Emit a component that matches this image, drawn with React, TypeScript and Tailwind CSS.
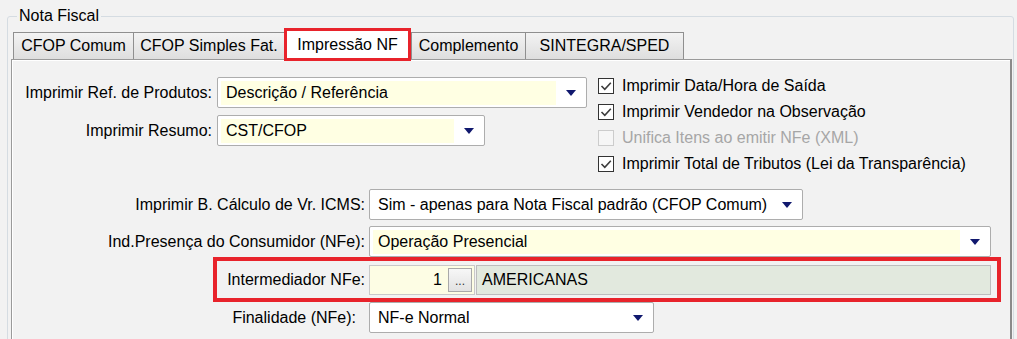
import React from "react";

type ComboProps = {
  width: string;
  value: string;
  yellow?: boolean;
};

function Arrow() {
  return (
    <svg width="10" height="6" viewBox="0 0 10 6">
      <path d="M0 0 H10 L5 6 Z" fill="#10186e" />
    </svg>
  );
}

function Combo({ width, value, yellow }: ComboProps) {
  return (
    <div
      className={`${width} h-[31px] shrink-0 border border-[#adadad] rounded-[2px] bg-white flex items-center`}
    >
      <div
        className={`flex-1 h-[24px] ml-[3px] pl-[5px] flex items-center whitespace-nowrap ${
          yellow ? "bg-[#ffffe3]" : ""
        }`}
      >
        {value}
      </div>
      <div className="w-[30px] h-full flex items-center justify-center">
        <Arrow />
      </div>
    </div>
  );
}

function Check({
  label,
  checked,
  disabled,
}: {
  label: string;
  checked?: boolean;
  disabled?: boolean;
}) {
  return (
    <div className="h-[26px] flex items-center">
      <div
        className={`w-[16px] h-[16px] border flex items-center justify-center ${
          disabled ? "border-[#cccccc] bg-[#f6f6f6]" : "border-[#333333] bg-white"
        }`}
      >
        {checked && (
          <svg width="14" height="14" viewBox="0 0 14 14">
            <path
              d="M2.5 7 L5.8 10.3 L11.8 3.8"
              fill="none"
              stroke="#3c3c3c"
              strokeWidth="1.6"
            />
          </svg>
        )}
      </div>
      <span
        className={`ml-[8px] whitespace-nowrap ${
          disabled ? "text-[#a6a6a6]" : "text-black"
        }`}
      >
        {label}
      </span>
    </div>
  );
}

const tabs = [
  { label: "CFOP Comum", width: "w-[121px]" },
  { label: "CFOP Simples Fat.", width: "w-[152px]" },
  { label: "Impressão NF", width: "w-[127px]", active: true },
  { label: "Complemento", width: "w-[115px]" },
  { label: "SINTEGRA/SPED", width: "w-[159px]" },
];

export default function App() {
  return (
    <div className="w-[1017px] h-[339px] overflow-hidden bg-[#f2f2f2] pt-[7px] pl-[7px] font-['Liberation_Sans',Arial,sans-serif] text-[16px] leading-[18px] text-black">
      <fieldset className="w-[1007px] h-[420px] border border-[#d5dce2] rounded-[3px]">
        <legend className="ml-[9px] px-[2px] leading-[18px]">Nota Fiscal</legend>

        {/* Tab strip */}
        <div className="h-[34px] ml-[5px] flex items-end">
          {tabs.map((t) =>
            t.active ? (
              <div
                key={t.label}
                className={`${t.width} h-[33px] -mb-[2px] relative z-10 border-[3px] border-[#e8232b] bg-white flex items-center justify-center whitespace-nowrap`}
              >
                {t.label}
              </div>
            ) : (
              <div
                key={t.label}
                className={`${t.width} h-[27px] border-t border-l border-r border-[#8f8f8f] -mr-px bg-gradient-to-b from-[#f3f3f3] to-[#dedede] flex items-center justify-center whitespace-nowrap`}
              >
                {t.label}
              </div>
            ),
          )}
        </div>

        {/* Tab page */}
        <div className="ml-[3px] w-[1001px] h-[380px] border border-[#9a9a9a] border-r-2 border-r-[#8a8a8a] shadow-[inset_1px_1px_0_#ffffff]">
          <div className="flex items-start">
            <div className="mt-[17px] flex flex-col gap-[7px]">
              <div className="flex items-center">
                <div className="w-[200px] text-right whitespace-nowrap">
                  Imprimir Ref. de Produtos:
                </div>
                <div className="ml-[5px]">
                  <Combo width="w-[370px]" value="Descrição / Referência" yellow />
                </div>
              </div>
              <div className="flex items-center">
                <div className="w-[200px] text-right whitespace-nowrap">
                  Imprimir Resumo:
                </div>
                <div className="ml-[5px]">
                  <Combo width="w-[268px]" value="CST/CFOP" yellow />
                </div>
              </div>
            </div>

            <div className="ml-[11px] mt-[13px] flex flex-col">
              <Check label="Imprimir Data/Hora de Saída" checked />
              <Check label="Imprimir Vendedor na Observação" checked />
              <Check label="Unifica Itens ao emitir NFe (XML)" disabled />
              <Check label="Imprimir Total de Tributos (Lei da Transparência)" checked />
            </div>
          </div>

          <div className="mt-[12px] flex flex-col">
            <div className="flex items-center">
              <div className="w-[353px] text-right whitespace-nowrap">
                Imprimir B. Cálculo de Vr. ICMS:
              </div>
              <div className="ml-[4px]">
                <Combo
                  width="w-[434px]"
                  value="Sim - apenas para Nota Fiscal padrão (CFOP Comum)"
                />
              </div>
            </div>

            <div className="mt-[6px] flex items-center">
              <div className="w-[353px] text-right whitespace-nowrap">
                Ind.Presença do Consumidor (NFe):
              </div>
              <div className="ml-[4px]">
                <Combo width="w-[622px]" value="Operação Presencial" yellow />
              </div>
            </div>

            {/* Intermediador */}
            <div className="ml-[201px] w-[788px] h-[45px] border-4 border-[#e8232b] flex items-center">
              <div className="w-[148px] text-right whitespace-nowrap">
                Intermediador NFe:
              </div>
              <div className="ml-[4px] w-[106px] h-[30px] border border-[#c9c9c9] bg-[#fdfde4] flex items-center">
                <div className="flex-1 text-right pr-[6px]">1</div>
                <div className="w-[24px] h-[24px] mr-[2px] border border-[#a9a9a9] bg-gradient-to-b from-[#f7f7f7] to-[#e2e2e2] flex items-end justify-center pb-[5px] text-[12px] leading-[10px] text-[#333]">
                  ...
                </div>
              </div>
              <div className="ml-[1px] w-[515px] h-[30px] border border-[#bdbdbd] bg-[#e2e9de] flex items-center pl-[5px]">
                AMERICANAS
              </div>
            </div>

            <div className="flex items-center">
              <div className="w-[353px] pr-[9px] text-right whitespace-nowrap">
                Finalidade (NFe):
              </div>
              <div className="ml-[4px]">
                <Combo width="w-[285px]" value="NF-e Normal" />
              </div>
            </div>
          </div>
        </div>
      </fieldset>
    </div>
  );
}
